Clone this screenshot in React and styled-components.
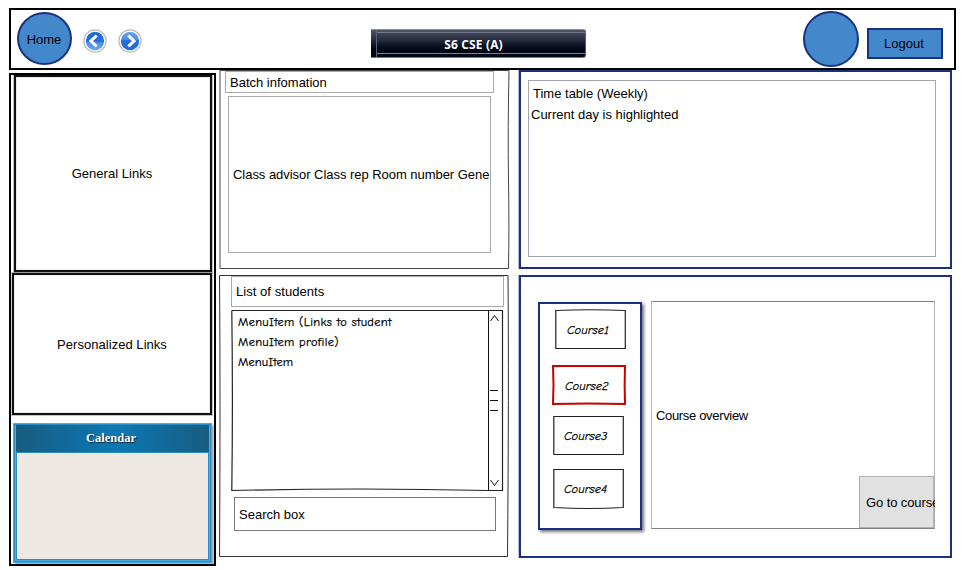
import React from "react";
import styled, { createGlobalStyle } from "styled-components";

const GlobalStyle = createGlobalStyle`
  * { box-sizing: border-box; }
  body {
    margin: 0;
    background: #fff;
    color: #000;
    font-family: "Liberation Sans", Arial, sans-serif;
    font-size: 13px;
    line-height: 16px;
    white-space: nowrap;
  }
  button { font: inherit; color: inherit; cursor: pointer; }
`;

const Page = styled.div`
  width: 968px;
  height: 570px;
  padding: 8px 0 0 9px;
  overflow: hidden;
`;

const Header = styled.header`
  display: flex;
  align-items: flex-start;
  width: 947px;
  height: 62px;
  border: 2px solid #000;
  padding-left: 6px;
`;

const Disc = styled.button`
  width: ${(p) => p.$w}px;
  height: ${(p) => p.$h}px;
  margin: ${(p) => p.$top}px 0 0 ${(p) => p.$left || 0}px;
  padding: 2px 1px 0 0;
  border: 2px solid #1a3080;
  border-radius: 50%;
  background: #4488cc;
`;

const NavButton = styled.button`
  width: 24px;
  height: 24px;
  margin: 19px 0 0 ${(p) => p.$left}px;
  padding: 0;
  border: 0;
  background: none;
  svg { display: block; }
`;

const ClassTitle = styled.h1`
  display: grid;
  grid-template-columns: 6px 1fr;
  width: 215px;
  height: 29px;
  margin: 19px 0 0 229px;
  border-radius: 0 3px 3px 0;
  background: linear-gradient(#50566a 0, #3c4156 4px, #262b40 10px, #0a1020 16px, #000614 20px, #000818 100%);
  border-top: 1px solid #8a8d96;
  border-bottom: 1px solid #777a80;
  border-right: 1px solid #555b69;
  color: #fff;
  font: bold 12px/22px "Open Sans", "Noto Sans", sans-serif;
  letter-spacing: 0.15px;
  text-align: center;
`;

const TitleGroove = styled.span`
  border-right: 1px solid #5c6172;
`;

const TitleText = styled.span`
  height: 22px;
  margin-top: 2px;
  border-top: 1px solid #72778a;
  border-bottom: 1px solid #7c808a;
  padding: 1px 15px 0 0;
`;

const Logout = styled.button`
  width: 76px;
  height: 31px;
  margin: 18px 0 0 8px;
  padding: 0 2px 0 0;
  border: 2px solid #1a3080;
  background: #4488cc;
`;

const Body = styled.main`
  display: flex;
  align-items: flex-start;
`;

const Sidebar = styled.nav`
  width: 207px;
  height: 493px;
  margin-top: 3px;
  border: 2px solid #000;
  padding-left: 1px;
`;

const LinkBox = styled.section`
  display: flex;
  align-items: center;
  justify-content: center;
  width: ${(p) => p.$w}px;
  height: ${(p) => p.$h}px;
  margin-left: ${(p) => p.$left || 0}px;
  margin-top: ${(p) => p.$gap || 0}px;
  padding: ${(p) => p.$drop || 0}px ${(p) => p.$shift || 0}px 0 0;
  border: 2px solid #101010;
  box-shadow: 0 0 0 1px rgba(0, 0, 0, 0.22), inset 0 0 0 1px rgba(0, 0, 0, 0.08);
  letter-spacing: 0.04px;
`;

const Calendar = styled.section`
  width: 199px;
  height: 140px;
  margin: 8px 0 0 1px;
  border: 2px solid #2a8cc4;
  outline: 1px solid #49abe0;
  outline-offset: -1px;
  box-shadow: 2px 2px 2px rgba(0, 0, 0, 0.35);
  background: #4cabe0;
  padding: 0 1px 1px;
`;

const CalendarTitle = styled.h2`
  height: 27px;
  margin: 0;
  padding-right: 3px;
  background: linear-gradient(90deg, #185c80, #0b78b4 52%, #185c80);
  color: #fff;
  font: bold 12.5px/26px "Liberation Serif", "Times New Roman", serif;
  text-align: center;
  text-shadow: 1px 1px 1px #123;
`;

const CalendarBody = styled.div`
  height: 108px;
  border: 1px solid #2a8cc4;
  background: #ede9e2;
`;

const Column = styled.div`
  width: ${(p) => p.$w}px;
  margin-left: ${(p) => p.$gap}px;
`;

const SketchPanel = styled.section`
  display: flex;
  flex-direction: column;
  position: relative;
  width: 290px;
  height: ${(p) => p.$h}px;
  margin-top: ${(p) => p.$gap || 0}px;
`;

const Outline = styled.svg`
  position: absolute;
  inset: 0;
  width: 100%;
  height: 100%;
  overflow: visible;
  pointer-events: none;
  fill: none;
`;

const Field = styled.div`
  display: flex;
  align-items: center;
  flex: none;
  width: ${(p) => p.$w}px;
  height: ${(p) => p.$h}px;
  margin: ${(p) => p.$top}px 0 0 ${(p) => p.$left}px;
  padding: ${(p) => p.$drop || 0}px 0 0 4px;
  border: 1px solid ${(p) => p.$tone || "#aaa"};
  letter-spacing: ${(p) => p.$track || 0}px;
`;

const StudentList = styled.div`
  display: flex;
  position: relative;
  flex: none;
  width: 272px;
  height: 181px;
  margin: 3px 0 0 12px;
`;

const Items = styled.ul`
  flex: 1;
  margin: 0;
  padding: 2px 0 0 7px;
  list-style: none;
  font: 12.4px/20px "Comic Sans MS", "Comic Neue", "Noto Sans", sans-serif;
  -webkit-text-stroke: 0.25px #000;
`;

const Item = styled.li`
  height: 20px;
  letter-spacing: ${(p) => p.$track || 0}px;
`;

const Scroll = styled.svg`
  flex: none;
  width: 16px;
  height: 181px;
  fill: none;
  stroke: #111;
`;

const BluePanel = styled.section`
  display: flex;
  align-items: flex-start;
  width: 433px;
  height: ${(p) => p.$h}px;
  margin-top: ${(p) => p.$gap || 0}px;
  border: 2px solid #1a3080;
  box-shadow: -1px 0 0 #b5bcd8;
`;

const TimeTable = styled.div`
  width: 408px;
  height: 177px;
  margin: 8px 0 0 7px;
  padding: 2px 0 0 2px;
  border: 1px solid #a4a6ae;
  line-height: 21px;
`;

const Line = styled.div`
  padding-left: ${(p) => p.$indent || 0}px;
`;

const CourseList = styled.div`
  width: 104px;
  height: 228px;
  margin: 25px 0 0 17px;
  padding: 5px 0 0 13px;
  border: 2px solid #1a3080;
  box-shadow: 2px 2px 3px rgba(0, 0, 0, 0.55);
`;

const Course = styled.button`
  display: flex;
  align-items: center;
  position: relative;
  width: ${(p) => p.$w}px;
  height: 40px;
  margin: ${(p) => p.$top || 0}px 0 0 ${(p) => p.$left || 0}px;
  padding: ${(p) => p.$drop || 0}px 0 0 ${(p) => p.$pad || 12}px;
  border: 0;
  background: #fff;
  font: italic 12.4px/16px "Comic Sans MS", "Comic Neue", "Noto Sans", sans-serif;
  -webkit-text-stroke: 0.25px #000;
`;

const Overview = styled.div`
  display: flex;
  align-items: center;
  justify-content: space-between;
  width: 284px;
  height: 228px;
  margin: 24px 0 0 9px;
  padding-left: 4px;
  border: 1px solid #b4b4b4;
  border-top-color: #808080;
  border-bottom-color: #808080;
`;

const OverviewText = styled.span`
  padding-top: 2px;
  letter-spacing: -0.33px;
`;

const GoTo = styled.button`
  align-self: flex-end;
  width: 76px;
  height: 52px;
  margin-right: -1px;
  padding: 2px 0 0 6px;
  border: 1px solid #b0b0b0;
  border-right-width: 2px;
  background: #e1e1e1;
  letter-spacing: -0.1px;
  text-align: left;
  overflow: clip;
  overflow-clip-margin: 2px;
`;

function Arrow({ back }) {
  const id = back ? "orb-back" : "orb-next";
  return (
    <svg width="24" height="24" viewBox="0 0 24 24">
      <defs>
        <linearGradient id={id} x1="0" y1={back ? 0 : 1} x2="0" y2={back ? 1 : 0}>
          <stop offset="0" stopColor="#1f68da" />
          <stop offset=".52" stopColor="#2670df" />
          <stop offset=".6" stopColor="#5090e4" />
          <stop offset="1" stopColor="#6ba5ea" />
        </linearGradient>
      </defs>
      <circle cx="12" cy="12" r="11.1" fill="#fff" stroke="#b9b9b9" strokeWidth="1.2" />
      <circle cx="12" cy="12" r="9.2" fill={`url(#${id})`} />
      <path
        d={back ? "M13.700 6.500 8 12l5.700 5.500" : "M10.300 6.500 16 12l-5.700 5.500"}
        fill="none"
        stroke="#fff"
        strokeWidth="3.1"
      />
    </svg>
  );
}

function CourseButton({ name, outline, color = "#222", weight = 1.2, ...rest }) {
  return (
    <Course {...rest}>
      <Outline>
        <path d={outline} stroke={color} strokeWidth={weight} />
      </Outline>
      {name}
    </Course>
  );
}

export default function App() {
  return (
    <>
      <GlobalStyle />
      <Page>
        <Header>
          <Disc $w={55} $h={53} $top={2}>Home</Disc>
          <NavButton $left={11} aria-label="Back"><Arrow back /></NavButton>
          <NavButton $left={11} aria-label="Forward"><Arrow /></NavButton>
          <ClassTitle>
            <TitleGroove />
            <TitleText>S6 CSE (A)</TitleText>
          </ClassTitle>
          <Disc $w={56} $h={56} $top={1} $left={217} aria-label="Profile" />
          <Logout>Logout</Logout>
        </Header>

        <Body>
          <Sidebar>
            <LinkBox $w={198} $h={197} $left={2} $drop={1} $shift={2}>General Links</LinkBox>
            <LinkBox $w={200} $h={142} $gap={1} $drop={2}>Personalized Links</LinkBox>
            <Calendar>
              <CalendarTitle>Calendar</CalendarTitle>
              <CalendarBody />
            </Calendar>
          </Sidebar>

          <Column $w={290} $gap={3}>
            <SketchPanel $h={199}>
              <Outline>
                <path d="M1 .5H290Q288.700 60 289.500 110T289.500 198.500H1V.5" stroke="#444" />
              </Outline>
              <Field $w={269} $h={22} $top={1} $left={6} $drop={2}>Batch infomation</Field>
              <Field $w={263} $h={157} $top={3} $left={9} $track={-0.04}>Class advisor Class rep Room number Gene</Field>
            </SketchPanel>
            <SketchPanel $h={282} $gap={6}>
              <Outline>
                <path d="M.5 .5H289Q290 110 288.500 281.500H.5Q1.500 120 .5 .5" stroke="#333" />
              </Outline>
              <Field $w={273} $h={31} $top={1} $left={12} $track={0.05}>List of students</Field>
              <StudentList>
                <Outline>
                  <path d="M.8 .5H271.500V180.500H257Q130 177.500 .8 180.500Q2 90 .8 .5" stroke="#222" strokeWidth="1.2" />
                </Outline>
                <Items>
                  <Item $track={0.3}>MenuItem (Links to student</Item>
                  <Item $track={0.3}>MenuItem profile)</Item>
                  <Item $track={0.1}>MenuItem</Item>
                </Items>
                <Scroll>
                  <path d="M1.500 0v181M3.500 11l4-5.500 4 5.500M3.500 170l4 5.500 4-5.500M3 80.500h8M3 90.500h8M3 100.500h8" />
                </Scroll>
              </StudentList>
              <Field $w={262} $h={34} $top={6} $left={15} $drop={2} $tone="#777">Search box</Field>
            </SketchPanel>
          </Column>

          <Column $w={434} $gap={10}>
            <BluePanel $h={199}>
              <TimeTable>
                <Line $indent={2}>Time table (Weekly)</Line>
                <Line>Current day is highlighted</Line>
              </TimeTable>
            </BluePanel>
            <BluePanel $h={283} $gap={6}>
              <CourseList>
                <CourseButton name="Course1" $w={71} $left={2} $drop={2} outline="M.8 1.500Q35 0 70.300 1.500V39.500H.8Z" />
                <CourseButton
                  name="Course2"
                  $w={74}
                  $top={16}
                  $drop={2}
                  color="#cc0000"
                  weight={2}
                  outline="M0 1H72Q71.300 20 72 39Q36 37.800 0 39Q1 20 0 1Z"
                />
                <CourseButton name="Course3" $w={71} $top={11} $pad={11} outline="M.8 .5H70.300V38.500H.8Z" />
                <CourseButton name="Course4" $w={71} $top={13} $pad={11} outline="M.8 .5H70.300V38.500Q35 40.500 .8 38.500Z" />
              </CourseList>
              <Overview>
                <OverviewText>Course overview</OverviewText>
                <GoTo>Go to course</GoTo>
              </Overview>
            </BluePanel>
          </Column>
        </Body>
      </Page>
    </>
  );
}
